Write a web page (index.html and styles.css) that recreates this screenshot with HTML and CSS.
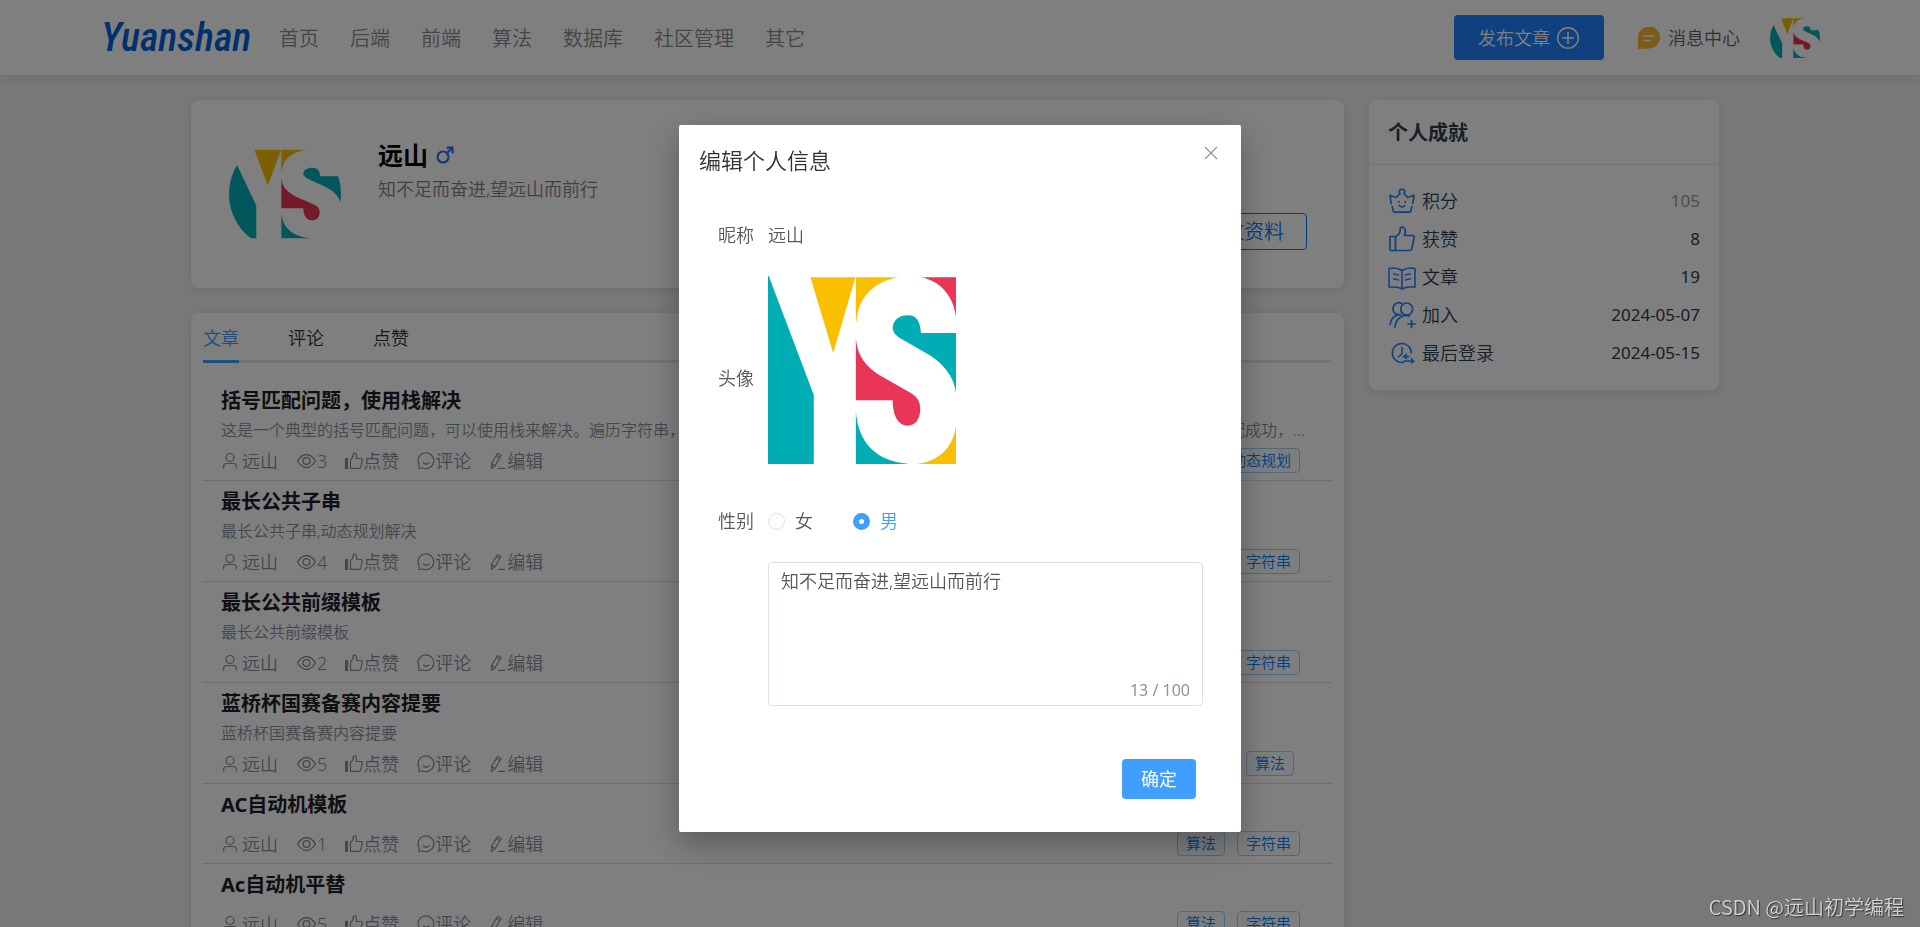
FILE: index.html
```html
<!DOCTYPE html>
<html lang="zh-CN">
<head>
<meta charset="utf-8">
<meta name="viewport" content="width=device-width, initial-scale=1">
<title>Yuanshan</title>
<link rel="stylesheet" href="styles.css">
</head>
<body>
<svg class="sprite" aria-hidden="true">
  <symbol id="ys" viewBox="0 0 505 564" preserveAspectRatio="none">
    <rect width="505" height="564" fill="#fff"/>
    <path fill="#00adb5" d="M0 0H2L123 357V564H0Z"/>
    <path fill="#f9bf00" d="M114 4H235L175 231Z"/>
    <path fill="#f9bf00" d="M236 4H350C290 15 242 60 238 135H236Z"/>
    <path fill="#e93656" d="M412 4H505V122C498 60 462 15 412 4Z"/>
    <path fill="#00adb5" d="M411 171H505V352C500 300 470 262 430 235L360 190C342 178 335 168 335 155C337 132 352 118 375 118C400 118 408 135 411 171Z"/>
    <path fill="#e93656" d="M236 185C240 240 262 272 308 303L378 347C400 361 409 374 409 400C408 432 395 449 375 449C350 449 335 420 335 373H236Z"/>
    <path fill="#00adb5" d="M236 405C242 500 290 555 375 563V564H236Z"/>
    <path fill="#f9bf00" d="M505 450C497 515 460 555 400 564H505Z"/>
  </symbol>
  <symbol id="user" viewBox="0 0 18 18"><g fill="none" stroke="currentColor" stroke-width="1.2"><circle cx="9" cy="5.500" r="4"/><path d="M2.600 16.500V14.500Q2.600 11.500 5.600 11.500H12.400Q15.400 11.500 15.400 14.500V16.500"/></g></symbol>
  <symbol id="eye" viewBox="0 0 21 18"><g fill="none" stroke="currentColor" stroke-width="1.3"><path d="M1.500 9Q5.500 2.500 10.500 2.500T19.500 9Q15.500 15.500 10.500 15.500T1.500 9Z"/><circle cx="10.500" cy="9" r="3.400"/></g></symbol>
  <symbol id="like" viewBox="0 0 18 18"><path fill="currentColor" d="M0 6H3V17H0Z"/><path fill="none" stroke="currentColor" stroke-width="1.200" stroke-linejoin="round" d="M5.500 16.400V7.500C8 6 8.300 4 8.300 1.800C8.500.7 11.500.5 11.500 3.500V6.500H16Q17.400 6.700 17.200 8L15.800 15Q15.500 16.400 14 16.400Z"/></symbol>
  <symbol id="chat" viewBox="0 0 18 18"><g fill="none" stroke="currentColor" stroke-width="1.200" stroke-linecap="round" stroke-linejoin="round"><path d="M2 16.500V12.500A7.900 7.900 0 1 1 5.800 16Z"/><path d="M6.500 11Q9.200 13.500 12 11"/></g></symbol>
  <symbol id="pen" viewBox="0 0 18 18"><g fill="none" stroke="currentColor" stroke-width="1.200" stroke-linejoin="round"><path d="M2.500 11.500L8.500 1.500L12 3.500L6 13.700L2.700 16.300ZM7.300 3.600L10.800 5.700M2.500 11.500L6 13.700M9 16.400H16"/></g></symbol>
  <symbol id="crown" viewBox="0 0 28 28"><g fill="none" stroke="currentColor" stroke-width="1.700" stroke-linecap="round" stroke-linejoin="round"><path d="M3.200 16.500L2 8.300L8.300 10.500L12 6.500C10 3.500 12 2.300 14 2.300S18 3.500 16 6.500L19.700 10.500L26 8.300L24.800 16.500M4.200 19.500L5 23.500Q5.400 25.200 7 25.200H21Q22.600 25.200 23 23.500L23.800 19.500M11.300 18.500Q14 21.500 16.700 18.500M10.800 14.500V15M17.200 14.500V15"/></g></symbol>
  <symbol id="thumb" viewBox="0 0 28 28"><g fill="none" stroke="currentColor" stroke-width="1.700" stroke-linejoin="round"><path d="M2 11.500H7.500V25.500H3Q2 25.500 2 24.500ZM7.500 11.500C11.500 10 12.300 7 12.300 4Q12.500 2 14.500 2Q17.500 2.500 17.300 6.500L16.500 10.500H24.500Q26.400 10.700 26 12.800L23.800 23.800Q23.400 25.500 21.700 25.500H7.500"/></g></symbol>
  <symbol id="book" viewBox="0 0 28 28"><g fill="none" stroke="currentColor" stroke-width="1.500" stroke-linejoin="round"><path d="M1 5.500Q8 4 14 7.500Q20 4 27 5.500V24H24Q18 23.500 14 26Q10 23.500 4 24H1ZM14 7.500V26M5 11Q8 10.500 11 12.300M5 16Q8 15.500 11 17.300M23 11Q20 10.500 17 12.300M23 16Q20 15.500 17 17.300"/></g></symbol>
  <symbol id="join" viewBox="0 0 28 28"><g fill="none" stroke="currentColor" stroke-width="1.700" stroke-linecap="round"><circle cx="18.700" cy="8" r="6"/><path d="M13.500 2.300A6 6 0 1 0 10.500 13.700M12.700 13.600H10.500Q3 15.500 2 23.500M21.500 15.200Q17.500 13.700 14 15.200Q7.500 18.500 7 26M23.500 19.500V26.500M20 23H27"/></g></symbol>
  <symbol id="clock" viewBox="0 0 28 28"><g fill="none" stroke="currentColor" stroke-width="1.500" stroke-linecap="round"><path d="M23.300 14A9.500 9.500 0 1 0 15.500 23.300M14 8.500V15L10.500 18M21 17.500H16L18.500 15.300M18.500 19.500L16 17.500M16 22H25.500L23.300 19.800M23.300 24.200L25.500 22"/></g></symbol>
</svg>

<header class="topbar">
  <a class="logo" href="#">Yuanshan</a>
  <nav class="nav">
    <a href="#">首页</a><a href="#">后端</a><a href="#">前端</a><a href="#">算法</a><a href="#">数据库</a><a href="#">社区管理</a><a href="#">其它</a>
  </nav>
  <div class="tools">
    <button class="publish" type="button">发布文章
      <svg width="24" height="24" viewBox="0 0 24 24" fill="none" stroke="currentColor" stroke-width="1.500" aria-hidden="true"><circle cx="12" cy="12" r="10.300"/><path d="M12 6V18M6 12H18"/></svg>
    </button>
    <a class="messages" href="#">
      <svg width="22" height="22" viewBox="0 0 22 22" aria-hidden="true"><path fill="#fbb62d" d="M0 22V11A11 11 0 1 1 11 21.500Z"/><path stroke="#fff" stroke-width="1.600" stroke-linecap="round" d="M6 9H16M6 13.500H12.500"/></svg>
      消息中心
    </a>
    <a class="avatar avatar-small" href="#" aria-label="远山"><svg><use href="#ys"/></svg></a>
  </div>
</header>

<main class="page">
  <div class="column">
    <section class="card profile">
      <div class="avatar avatar-large"><svg><use href="#ys"/></svg></div>
      <div class="who">
        <h1>远山
          <svg width="18" height="18" viewBox="0 0 18 18" fill="none" stroke="#2f6fee" stroke-width="2.200" role="img" aria-label="男"><circle cx="7" cy="11" r="5.500"/><path d="M11 7L16.500 1.500M10.500 1.700H16.500V7.500"/></svg>
        </h1>
        <p>知不足而奋进,望远山而前行</p>
      </div>
      <button class="edit-profile" type="button">修改资料</button>
    </section>

    <section class="card posts">
      <nav class="tabs">
        <a class="active" href="#">文章</a><a href="#">评论</a><a href="#">点赞</a>
      </nav>

      <article class="post">
        <h2>括号匹配问题，使用栈解决</h2>
        <p>这是一个典型的括号匹配问题，可以使用栈来解决。遍历字符串，当遇到左括号时将其压入栈中，遇到右括号时与栈顶元素进行比较，若二者匹配成功，则弹出栈顶元素，继续遍历</p>
        <div class="meta">
          <span class="author"><svg><use href="#user"/></svg>远山</span><span class="views"><svg><use href="#eye"/></svg>3</span>
          <a href="#"><svg><use href="#like"/></svg>点赞</a><a href="#"><svg><use href="#chat"/></svg>评论</a><a href="#"><svg><use href="#pen"/></svg>编辑</a>
          <div class="tags"><span>动态规划</span></div>
        </div>
      </article>
      <article class="post">
        <h2>最长公共子串</h2>
        <p>最长公共子串,动态规划解决</p>
        <div class="meta">
          <span class="author"><svg><use href="#user"/></svg>远山</span><span class="views"><svg><use href="#eye"/></svg>4</span>
          <a href="#"><svg><use href="#like"/></svg>点赞</a><a href="#"><svg><use href="#chat"/></svg>评论</a><a href="#"><svg><use href="#pen"/></svg>编辑</a>
          <div class="tags"><span>字符串</span></div>
        </div>
      </article>
      <article class="post">
        <h2>最长公共前缀模板</h2>
        <p>最长公共前缀模板</p>
        <div class="meta">
          <span class="author"><svg><use href="#user"/></svg>远山</span><span class="views"><svg><use href="#eye"/></svg>2</span>
          <a href="#"><svg><use href="#like"/></svg>点赞</a><a href="#"><svg><use href="#chat"/></svg>评论</a><a href="#"><svg><use href="#pen"/></svg>编辑</a>
          <div class="tags"><span>字符串</span></div>
        </div>
      </article>
      <article class="post">
        <h2>蓝桥杯国赛备赛内容提要</h2>
        <p>蓝桥杯国赛备赛内容提要</p>
        <div class="meta">
          <span class="author"><svg><use href="#user"/></svg>远山</span><span class="views"><svg><use href="#eye"/></svg>5</span>
          <a href="#"><svg><use href="#like"/></svg>点赞</a><a href="#"><svg><use href="#chat"/></svg>评论</a><a href="#"><svg><use href="#pen"/></svg>编辑</a>
          <div class="tags tags-single"><span>算法</span></div>
        </div>
      </article>
      <article class="post">
        <h2>AC自动机模板</h2>
        <div class="meta">
          <span class="author"><svg><use href="#user"/></svg>远山</span><span class="views"><svg><use href="#eye"/></svg>1</span>
          <a href="#"><svg><use href="#like"/></svg>点赞</a><a href="#"><svg><use href="#chat"/></svg>评论</a><a href="#"><svg><use href="#pen"/></svg>编辑</a>
          <div class="tags"><span>算法</span><span>字符串</span></div>
        </div>
      </article>
      <article class="post">
        <h2>Ac自动机平替</h2>
        <div class="meta">
          <span class="author"><svg><use href="#user"/></svg>远山</span><span class="views"><svg><use href="#eye"/></svg>5</span>
          <a href="#"><svg><use href="#like"/></svg>点赞</a><a href="#"><svg><use href="#chat"/></svg>评论</a><a href="#"><svg><use href="#pen"/></svg>编辑</a>
          <div class="tags"><span>算法</span><span>字符串</span></div>
        </div>
      </article>
    </section>
  </div>

  <aside class="card achievements">
    <h2>个人成就</h2>
    <dl>
      <div><dt><svg><use href="#crown"/></svg>积分</dt><dd class="muted">105</dd></div>
      <div><dt><svg><use href="#thumb"/></svg>获赞</dt><dd>8</dd></div>
      <div><dt><svg><use href="#book"/></svg>文章</dt><dd>19</dd></div>
      <div><dt><svg><use href="#join"/></svg>加入</dt><dd>2024-05-07</dd></div>
      <div><dt><svg><use href="#clock"/></svg>最后登录</dt><dd>2024-05-15</dd></div>
    </dl>
  </aside>
</main>

<div class="overlay">
  <form class="dialog" role="dialog" aria-modal="true" aria-labelledby="dialog-title">
    <header class="dialog-head">
      <h2 id="dialog-title">编辑个人信息</h2>
      <button class="close" type="button" aria-label="关闭"><svg width="14" height="14" viewBox="0 0 14 14" stroke="currentColor" stroke-width="1.200"><path d="M1 1L13 13M13 1L1 13"/></svg></button>
    </header>
    <div class="fields">
      <div class="field"><span class="label">昵称</span><span>远山</span></div>
      <div class="field field-picture"><span class="label">头像</span><svg class="picture" role="img" aria-label="头像"><use href="#ys"/></svg></div>
      <div class="field" role="radiogroup" aria-label="性别"><span class="label">性别</span>
        <label class="radio"><input type="radio" name="sex">女</label>
        <label class="radio"><input type="radio" name="sex" checked>男</label>
      </div>
      <div class="field">
        <span class="label"></span>
        <div class="bio">
          <textarea aria-label="个人简介" maxlength="100">知不足而奋进,望远山而前行</textarea>
          <span class="count">13 / 100</span>
        </div>
      </div>
    </div>
    <footer class="dialog-foot"><button class="confirm" type="button">确定</button></footer>
  </form>
</div>

<div class="watermark">CSDN @远山初学编程</div>
</body>
</html>
```

FILE: styles.css
```css
* { box-sizing: border-box; }

body {
  margin: 0;
  height: 100vh;
  overflow: hidden;
  background: #f1f1f1;
  color: #2c3e50;
  font: 350 18px/24px "Noto Sans", "Noto Sans CJK SC", sans-serif;
}

h1, h2, p, dl, dd { margin: 0; }
a { color: inherit; text-decoration: none; }
button, textarea { font: inherit; }
svg { flex: none; display: block; }
.sprite { position: absolute; width: 0; height: 0; }

/* Top bar */
.topbar {
  display: flex;
  align-items: center;
  height: 75px;
  padding: 0 100px 0 101px;
  background: #fff;
  box-shadow: 0 2px 12px rgba(0, 0, 0, 0.12);
  position: relative;
}
.logo {
  width: 147px;
  color: #0062dc;
  font: italic 500 40px/48px "Roboto Condensed", "Liberation Sans Narrow", "Open Sans Condensed", "Liberation Sans", sans-serif;
}
.nav {
  display: flex;
  gap: 31px;
  margin-left: 31px;
  padding-top: 2px;
  color: #8a8a8a;
  font-size: 20px;
}
.tools {
  display: flex;
  align-items: center;
  gap: 30px;
  margin-left: auto;
}
.publish {
  display: flex;
  align-items: center;
  justify-content: center;
  gap: 6px;
  width: 150px;
  height: 45px;
  margin-right: 4px;
  border: 0;
  border-radius: 4px;
  background: #1e80ff;
  color: #fff;
}
.messages {
  display: flex;
  align-items: center;
  gap: 8px;
  color: #606266;
}
.avatar {
  display: flex;
  align-items: center;
  border-radius: 50%;
  overflow: hidden;
}
.avatar svg { width: 100%; height: 80%; }
.avatar-small { width: 50px; height: 50px; }
.avatar-large { width: 112px; height: 112px; }

/* Page columns */
.page {
  display: flex;
  align-items: flex-start;
  gap: 25px;
  margin-right: 10px;
  padding: 25px calc(10% - 1px) 0;
}
.column {
  flex: 1;
  min-width: 0;
  display: flex;
  flex-direction: column;
  gap: 25px;
}
.card {
  border-radius: 8px;
  background: #fff;
  box-shadow: 0 2px 12px rgba(0, 0, 0, 0.1);
}

.profile {
  display: flex;
  gap: 37px;
  padding: 38px 37px 38px 38px;
}
.who { flex: 1; }
.who h1 {
  display: flex;
  align-items: center;
  gap: 8px;
  color: #000;
  font-size: 25px;
  font-weight: 700;
  line-height: 34px;
}
.who p { color: #808286; line-height: 34px; }
.edit-profile {
  align-self: flex-end;
  height: 37px;
  padding: 0 22px;
  border: 1px solid #007fff;
  border-radius: 4px;
  background: transparent;
  color: #007fff;
  font-size: 20px;
  line-height: 24px;
}

/* Posts */
.posts { padding: 0 12px; }
.tabs {
  display: flex;
  gap: 49px;
  margin-bottom: 17px;
  box-shadow: inset 0 -3px #e4e7ed;
  color: #303133;
  line-height: 50px;
}
.tabs a {
  height: 50px;
  border-bottom: 3px solid transparent;
}
.tabs .active { border-color: #409eff; color: #409eff; }

.post {
  padding: 2px 24px 0 18px;
  border-bottom: 1px solid #dcdcdc;
}
.post h2 {
  color: #1d2129;
  font-size: 20px;
  font-weight: 700;
  line-height: 38px;
}
.post p {
  overflow: hidden;
  color: #86909c;
  font-size: 16px;
  line-height: 21px;
  text-overflow: ellipsis;
  white-space: nowrap;
}
.meta {
  display: flex;
  align-items: center;
  gap: 18px;
  height: 39px;
  color: #86909c;
}
.meta > a, .meta > span { display: flex; align-items: center; }
.meta svg { width: 18px; height: 18px; }
.meta .author { gap: 3px; }
.meta .views svg { width: 21px; }
.tags {
  display: flex;
  gap: 12px;
  margin: 0 8px 0 auto;
}
.tags-single { margin-right: 14px; }
.tags span {
  padding: 0 8px;
  border: 1px solid #a3cfff;
  border-radius: 4px;
  background: #fafcff;
  color: #007fff;
  font-size: 15px;
  line-height: 23px;
}

/* Achievements */
.achievements { width: 350px; }
.achievements h2 {
  padding: 2px 19px 0;
  border-bottom: 1px solid #e8e8e8;
  font-size: 20px;
  font-weight: 700;
  line-height: 62px;
}
.achievements dl { padding: 17px 19px 18px; }
.achievements dl div, .achievements dt {
  display: flex;
  align-items: center;
  height: 38px;
}
.achievements dl div { justify-content: space-between; }
.achievements dt { gap: 6px; }
.achievements dt svg { width: 28px; height: 28px; color: #1e80ff; }
.achievements dd { font-size: 17px; font-weight: 400; }
.achievements .muted { color: #999; }

/* Dialog */
.overlay {
  position: fixed;
  inset: 0;
  overflow: auto;
  padding-top: 125px;
  background: rgba(0, 0, 0, 0.5);
}
.dialog {
  width: 562px;
  max-width: 100%;
  margin: 0 auto;
  padding-bottom: 33px;
  border-radius: 2px;
  background: #fff;
  box-shadow: 0 12px 32px rgba(0, 0, 0, 0.3);
  color: #55575b;
}
.dialog-head {
  display: flex;
  justify-content: space-between;
  padding: 20px 23px 0 20px;
}
.dialog-head h2 {
  color: #303133;
  font-size: 22px;
  font-weight: 350;
  line-height: 30px;
}
.close {
  height: 16px;
  padding: 0;
  border: 0;
  background: none;
  color: #909399;
}
.fields {
  display: flex;
  flex-direction: column;
  gap: 21px;
  padding: 40px 38px 0 39px;
}
.field {
  display: flex;
  align-items: center;
  min-height: 40px;
}
.label { flex: none; width: 50px; }
.field-picture { min-height: 204px; }
.picture { width: 188px; height: 188px; align-self: flex-start; }
.radio {
  display: flex;
  align-items: center;
  gap: 10px;
  margin-right: 40px;
}
.radio input {
  appearance: none;
  width: 17px;
  height: 17px;
  margin: 0;
  border: 1px solid #dcdfe6;
  border-radius: 50%;
  background: #fff;
}
.radio input:checked { border: 6px solid #409eff; }
.radio:has(input:checked) { color: #409eff; }
.bio { position: relative; flex: 1; }
.bio textarea {
  display: block;
  width: 100%;
  height: 144px;
  padding: 6px 12px;
  border: 1px solid #dcdfe6;
  border-radius: 4px;
  outline: 0;
  color: inherit;
  line-height: 24px;
  resize: none;
}
.count {
  position: absolute;
  right: 13px;
  bottom: 4px;
  color: #909399;
  font-size: 16px;
  font-weight: 400;
}
.dialog-foot {
  display: flex;
  justify-content: flex-end;
  padding: 53px 45px 0;
}
.confirm {
  width: 74px;
  height: 40px;
  border: 0;
  border-radius: 4px;
  background: #409eff;
  color: #fff;
  font-weight: 400;
}

.watermark {
  position: fixed;
  right: 16px;
  bottom: 8px;
  color: #d2d2d2;
  font: 350 20px/24px "Noto Sans CJK SC", sans-serif;
  text-shadow: 1px 1px 1px #333;
}
```
